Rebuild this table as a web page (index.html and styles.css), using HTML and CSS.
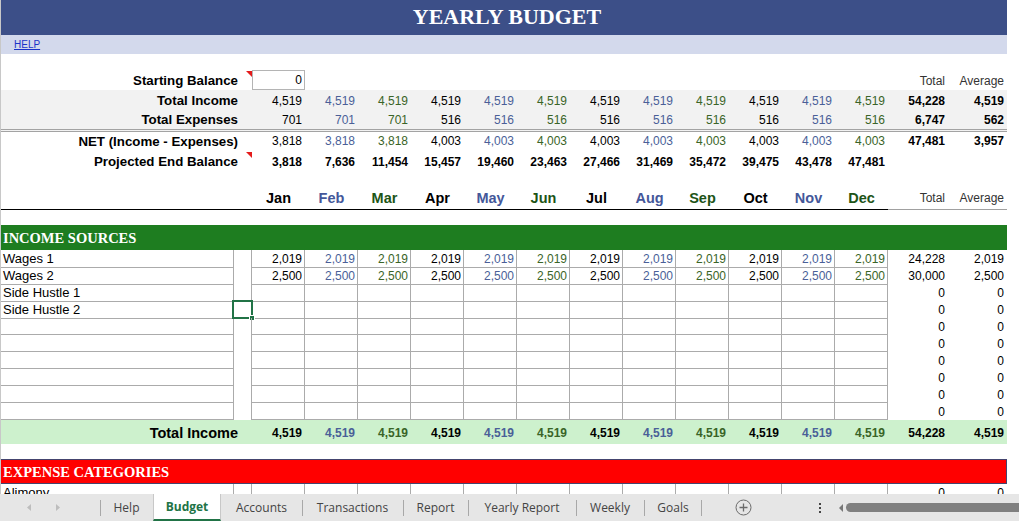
FILE: index.html
```html
<!DOCTYPE html>
<html>
<head>
<meta charset="utf-8">
<link rel="stylesheet" href="styles.css">
</head>
<body>
<div class="app">
  <div class="sheet">
    <div class="title">YEARLY BUDGET</div>
    <div class="help"><span class="link">HELP</span></div>
    <div class="gap g16"></div>

    <div class="row sum">
      <div class="lab note">Starting Balance</div>
      <div class="n inbox">0</div>
      <div></div><div></div><div></div><div></div><div></div><div></div><div></div><div></div><div></div><div></div><div></div>
      <div class="n hd">Total</div><div class="n hd">Average</div>
    </div>
    <div class="row sum shade">
      <div class="lab">Total Income</div>
      <div class="n">4,519</div><div class="n c1">4,519</div><div class="n c2">4,519</div>
      <div class="n">4,519</div><div class="n c1">4,519</div><div class="n c2">4,519</div>
      <div class="n">4,519</div><div class="n c1">4,519</div><div class="n c2">4,519</div>
      <div class="n">4,519</div><div class="n c1">4,519</div><div class="n c2">4,519</div>
      <div class="n b">54,228</div><div class="n b">4,519</div>
    </div>
    <div class="row sum shade dbl">
      <div class="lab">Total Expenses</div>
      <div class="n">701</div><div class="n c1">701</div><div class="n c2">701</div>
      <div class="n">516</div><div class="n c1">516</div><div class="n c2">516</div>
      <div class="n">516</div><div class="n c1">516</div><div class="n c2">516</div>
      <div class="n">516</div><div class="n c1">516</div><div class="n c2">516</div>
      <div class="n b">6,747</div><div class="n b">562</div>
    </div>
    <div class="row sum s19">
      <div class="lab">NET (Income - Expenses)</div>
      <div class="n">3,818</div><div class="n c1">3,818</div><div class="n c2">3,818</div>
      <div class="n">4,003</div><div class="n c1">4,003</div><div class="n c2">4,003</div>
      <div class="n">4,003</div><div class="n c1">4,003</div><div class="n c2">4,003</div>
      <div class="n">4,003</div><div class="n c1">4,003</div><div class="n c2">4,003</div>
      <div class="n b">47,481</div><div class="n b">3,957</div>
    </div>
    <div class="row sum">
      <div class="lab note">Projected End Balance</div>
      <div class="n b">3,818</div><div class="n b">7,636</div><div class="n b">11,454</div>
      <div class="n b">15,457</div><div class="n b">19,460</div><div class="n b">23,463</div>
      <div class="n b">27,466</div><div class="n b">31,469</div><div class="n b">35,472</div>
      <div class="n b">39,475</div><div class="n b">43,478</div><div class="n b">47,481</div>
      <div></div><div></div>
    </div>
    <div class="gap g15"></div>

    <div class="row mh">
      <div class="lab"></div>
      <div class="mon">Jan</div><div class="mon h1">Feb</div><div class="mon h2">Mar</div>
      <div class="mon">Apr</div><div class="mon h1">May</div><div class="mon h2">Jun</div>
      <div class="mon">Jul</div><div class="mon h1">Aug</div><div class="mon h2">Sep</div>
      <div class="mon">Oct</div><div class="mon h1">Nov</div><div class="mon h2">Dec</div>
      <div class="n hd th">Total</div><div class="n hd th">Average</div>
    </div>
    <div class="gap g17"></div>

    <div class="section income">INCOME SOURCES</div>

    <div class="row data">
      <div class="lbl">Wages 1</div><div class="nar"></div>
      <div class="m">2,019</div><div class="m c1">2,019</div><div class="m c2">2,019</div>
      <div class="m">2,019</div><div class="m c1">2,019</div><div class="m c2">2,019</div>
      <div class="m">2,019</div><div class="m c1">2,019</div><div class="m c2">2,019</div>
      <div class="m">2,019</div><div class="m c1">2,019</div><div class="m c2">2,019</div>
      <div class="t">24,228</div><div class="t">2,019</div>
    </div>
    <div class="row data">
      <div class="lbl">Wages 2</div><div class="nar"></div>
      <div class="m">2,500</div><div class="m c1">2,500</div><div class="m c2">2,500</div>
      <div class="m">2,500</div><div class="m c1">2,500</div><div class="m c2">2,500</div>
      <div class="m">2,500</div><div class="m c1">2,500</div><div class="m c2">2,500</div>
      <div class="m">2,500</div><div class="m c1">2,500</div><div class="m c2">2,500</div>
      <div class="t">30,000</div><div class="t">2,500</div>
    </div>
    <div class="row data">
      <div class="lbl">Side Hustle 1</div><div class="nar"></div>
      <div class="m"></div><div class="m"></div><div class="m"></div><div class="m"></div><div class="m"></div><div class="m"></div>
      <div class="m"></div><div class="m"></div><div class="m"></div><div class="m"></div><div class="m"></div><div class="m"></div>
      <div class="t">0</div><div class="t">0</div>
    </div>
    <div class="row data">
      <div class="lbl">Side Hustle 2</div><div class="nar"><div class="sel"><span class="handle"></span></div></div>
      <div class="m"></div><div class="m"></div><div class="m"></div><div class="m"></div><div class="m"></div><div class="m"></div>
      <div class="m"></div><div class="m"></div><div class="m"></div><div class="m"></div><div class="m"></div><div class="m"></div>
      <div class="t">0</div><div class="t">0</div>
    </div>
    <div class="row data">
      <div class="lbl"></div><div class="nar"></div>
      <div class="m"></div><div class="m"></div><div class="m"></div><div class="m"></div><div class="m"></div><div class="m"></div>
      <div class="m"></div><div class="m"></div><div class="m"></div><div class="m"></div><div class="m"></div><div class="m"></div>
      <div class="t">0</div><div class="t">0</div>
    </div>
    <div class="row data">
      <div class="lbl"></div><div class="nar"></div>
      <div class="m"></div><div class="m"></div><div class="m"></div><div class="m"></div><div class="m"></div><div class="m"></div>
      <div class="m"></div><div class="m"></div><div class="m"></div><div class="m"></div><div class="m"></div><div class="m"></div>
      <div class="t">0</div><div class="t">0</div>
    </div>
    <div class="row data">
      <div class="lbl"></div><div class="nar"></div>
      <div class="m"></div><div class="m"></div><div class="m"></div><div class="m"></div><div class="m"></div><div class="m"></div>
      <div class="m"></div><div class="m"></div><div class="m"></div><div class="m"></div><div class="m"></div><div class="m"></div>
      <div class="t">0</div><div class="t">0</div>
    </div>
    <div class="row data">
      <div class="lbl"></div><div class="nar"></div>
      <div class="m"></div><div class="m"></div><div class="m"></div><div class="m"></div><div class="m"></div><div class="m"></div>
      <div class="m"></div><div class="m"></div><div class="m"></div><div class="m"></div><div class="m"></div><div class="m"></div>
      <div class="t">0</div><div class="t">0</div>
    </div>
    <div class="row data">
      <div class="lbl"></div><div class="nar"></div>
      <div class="m"></div><div class="m"></div><div class="m"></div><div class="m"></div><div class="m"></div><div class="m"></div>
      <div class="m"></div><div class="m"></div><div class="m"></div><div class="m"></div><div class="m"></div><div class="m"></div>
      <div class="t">0</div><div class="t">0</div>
    </div>
    <div class="row data">
      <div class="lbl"></div><div class="nar"></div>
      <div class="m"></div><div class="m"></div><div class="m"></div><div class="m"></div><div class="m"></div><div class="m"></div>
      <div class="m"></div><div class="m"></div><div class="m"></div><div class="m"></div><div class="m"></div><div class="m"></div>
      <div class="t">0</div><div class="t">0</div>
    </div>

    <div class="row total">
      <div class="lab">Total Income</div>
      <div class="n">4,519</div><div class="n c1">4,519</div><div class="n c2">4,519</div>
      <div class="n">4,519</div><div class="n c1">4,519</div><div class="n c2">4,519</div>
      <div class="n">4,519</div><div class="n c1">4,519</div><div class="n c2">4,519</div>
      <div class="n">4,519</div><div class="n c1">4,519</div><div class="n c2">4,519</div>
      <div class="n">54,228</div><div class="n">4,519</div>
    </div>
    <div class="gap g15"></div>

    <div class="section expense">EXPENSE CATEGORIES</div>
    <div class="row data">
      <div class="lbl">Alimony</div><div class="nar"></div>
      <div class="m"></div><div class="m"></div><div class="m"></div><div class="m"></div><div class="m"></div><div class="m"></div>
      <div class="m"></div><div class="m"></div><div class="m"></div><div class="m"></div><div class="m"></div><div class="m"></div>
      <div class="t">0</div><div class="t">0</div>
    </div>
  </div>

  <div class="tabbar">
    <div class="nav">
      <svg width="100" height="27" viewBox="0 0 100 27">
        <polygon points="31,10 27,13.5 31,17" fill="#bdbdbd"/>
        <polygon points="56,10 60,13.5 56,17" fill="#bdbdbd"/>
      </svg>
    </div>
    <div class="tab t-help">Help</div>
    <div class="tab active t-budget">Budget</div>
    <div class="tab nosep t-accounts">Accounts</div>
    <div class="tab t-trans">Transactions</div>
    <div class="tab t-report">Report</div>
    <div class="tab t-yearly">Yearly Report</div>
    <div class="tab t-weekly">Weekly</div>
    <div class="tab last t-goals">Goals</div>
    <div class="add">
      <svg width="17" height="17" viewBox="0 0 17 17">
        <circle cx="8.5" cy="8.5" r="7.5" fill="none" stroke="#6b6b6b" stroke-width="1"/>
        <path d="M8.5 4.5v8M4.5 8.5h8" stroke="#6b6b6b" stroke-width="1.3"/>
      </svg>
    </div>
    <div class="more">
      <svg width="4" height="12" viewBox="0 0 4 12">
        <rect x="1" y="1" width="2" height="2" fill="#444"/>
        <rect x="1" y="5" width="2" height="2" fill="#444"/>
        <rect x="1" y="9" width="2" height="2" fill="#444"/>
      </svg>
    </div>
    <div class="scroll">
      <svg width="6" height="8" viewBox="0 0 6 8"><polygon points="5,0 1,4 5,8" fill="#777"/></svg>
      <div class="thumb"></div>
    </div>
  </div>
</div>
</body>
</html>
```

FILE: styles.css
```css
* { box-sizing: border-box; }
html, body { margin: 0; padding: 0; }
body {
  width: 1019px;
  height: 521px;
  overflow: hidden;
  background: #fff;
  color: #000;
  font-family: "Liberation Sans", Arial, sans-serif;
}
.app { display: flex; flex-direction: column; height: 521px; }
.sheet {
  flex: 1;
  overflow: hidden;
  width: 1007px;
  border-left: 1px solid #c8c8c8;
}
.title {
  height: 35px;
  line-height: 34px;
  background: #3c4f88;
  color: #fff;
  text-align: center;
  font-family: "Liberation Serif", "Times New Roman", serif;
  font-weight: bold;
  font-size: 22px;
  padding-left: 6px;
}
.help {
  height: 19px;
  line-height: 19px;
  background: #d3d9ec;
  padding-left: 13px;
  font-size: 10px;
}
.link { color: #1a33c8; text-decoration: underline; }
.gap { width: 100%; }
.g15 { height: 15px; }
.g16 { height: 16px; }
.g17 { height: 17px; }

.row {
  display: grid;
  grid-template-columns: 233px 18px repeat(12, 53px) 60px 59px;
}
.n { text-align: right; padding-right: 3px; white-space: nowrap; }
.b { font-weight: bold; }
.c1 { color: #4a5f98; }
.c2 { color: #3a6427; }

.sum { height: 20px; line-height: 20px; font-size: 12px; padding-top: 1px; }
.sum.s19 { height: 19px; line-height: 19px; padding-top: 0; }
.sum.dbl { height: 22px; line-height: 20px; border-bottom: 3px double #a3a3a3; padding-top: 0; }
.shade { background: #f2f2f2; }
.lab {
  grid-column: span 2;
  text-align: right;
  padding-right: 14px;
  font-weight: bold;
  font-size: 13.3px;
  white-space: nowrap;
  position: relative;
}
.note::after {
  content: "";
  position: absolute;
  right: 0;
  top: 0;
  border-top: 6px solid #e41b1b;
  border-left: 6px solid transparent;
}
.inbox { border: 1px solid #b4b4b4; line-height: 18px; padding-right: 2px; margin-top: -1px; height: 20px; }
.hd { color: #333; }

.mh { height: 22px; line-height: 22px; }
.mh > div { border-bottom: 1px solid #000; padding-top: 1px; }
.mh > .th { border-bottom-color: #a0a0a0; font-size: 12px; line-height: 22px; }
.mon { text-align: center; font-weight: bold; font-size: 14.5px; }
.h1 { color: #44579a; }
.h2 { color: #1d5416; }

.section {
  height: 25px;
  line-height: 27px;
  padding-left: 2px;
  color: #fff;
  font-family: "Liberation Serif", "Times New Roman", serif;
  font-weight: bold;
  font-size: 14.5px;
}
.income { background: #1e7d20; }
.expense { background: #ff0000; border: 1px solid #44446e; border-left: 0; line-height: 25px; }

.data { height: 17px; line-height: 16px; font-size: 12px; }
.data > div { white-space: nowrap; padding-top: 1px; }
.lbl {
  border-right: 1px solid #ababab;
  border-bottom: 1px solid #ababab;
  padding-left: 2px;
  font-size: 13px;
  line-height: 16px;
}
.data > .nar { border-right: 1px solid #ababab; position: relative; padding-top: 0; }
.m {
  border-right: 1px solid #ababab;
  border-bottom: 1px solid #ababab;
  text-align: right;
  padding-right: 2px;
}
.t { text-align: right; padding-right: 3px; }
.sel {
  position: absolute;
  left: -2px;
  top: -1px;
  width: 21px;
  height: 19px;
  border: 2px solid #217346;
}
.handle {
  position: absolute;
  right: -4px;
  bottom: -4px;
  width: 6px;
  height: 6px;
  background: #217346;
  border: 1px solid #fff;
}

.total { height: 24px; line-height: 24px; background: #cdf1cd; font-size: 12px; font-weight: bold; padding-top: 1px; }
.total .lab { font-size: 14.5px; }

.tabbar {
  flex: 0 0 27px;
  height: 27px;
  display: flex;
  align-items: stretch;
  background: #e6e6e6;
  font-family: "Open Sans", "Noto Sans", sans-serif;
  font-size: 12px;
  color: #444;
}
.nav { width: 100px; flex-shrink: 0; }
.nav svg { display: block; }
.tab {
  position: relative;
  display: flex;
  align-items: center;
  justify-content: center;
  flex-shrink: 0;
  white-space: nowrap;
}
.t-help { width: 53px; }
.t-budget { width: 68px; }
.t-accounts { width: 81px; }
.t-trans { width: 101px; }
.t-report { width: 65px; }
.t-yearly { width: 108px; }
.t-weekly { width: 68px; }
.t-goals { width: 58px; }
.tab::before {
  content: "";
  position: absolute;
  left: 0;
  top: 6px;
  bottom: 5px;
  width: 1px;
  background: #a8a8a8;
}
.tab.last::after {
  content: "";
  position: absolute;
  right: 0;
  top: 6px;
  bottom: 5px;
  width: 1px;
  background: #a8a8a8;
}
.tab.nosep::before { display: none; }
.tab.active {
  background: #fff;
  color: #217346;
  font-weight: bold;
  border-left: 1px solid #c8c8c8;
  border-right: 1px solid #c8c8c8;
  border-bottom: 2px solid #217346;
}
.tab.active::before { display: none; }
.add { margin-left: 33px; display: flex; align-items: center; flex-shrink: 0; }
.add svg { display: block; }
.more { margin-left: 66px; display: flex; align-items: center; flex-shrink: 0; }
.more svg { display: block; }
.scroll { margin-left: 16px; flex: 1; display: flex; align-items: center; gap: 2px; }
.scroll svg { display: block; flex-shrink: 0; }
.thumb { flex: 1; height: 9px; background: #808080; border-radius: 5px 0 0 5px; }
```
